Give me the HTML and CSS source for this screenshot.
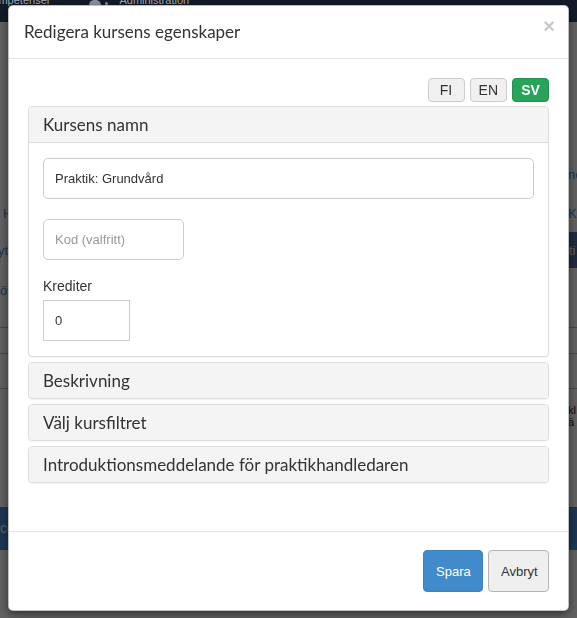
FILE: index.html
```html
<!DOCTYPE html>
<html lang="sv">
<head>
<meta charset="utf-8">
<title>Redigera kursens egenskaper</title>
<link rel="stylesheet" href="styles.css">
</head>
<body>
<div class="page">
  <nav class="topnav">
    <a class="nav-link nav-first">Kompetenser</a>
    <span class="nav-user">
      <svg width="14" height="14" viewBox="0 0 14 14"><circle cx="7" cy="4" r="3.4" fill="#8a929c"/><path d="M1 14 C1 9.5 3.5 8 7 8 C10.5 8 13 9.5 13 14 Z" fill="#8a929c"/></svg>
      <span class="nav-caret"></span>
    </span>
    <a class="nav-link">Administration</a>
  </nav>
  <main class="bg-content">
    <div class="bg-row r1"><span class="bg-left"></span><span class="bg-right bg-link">ne</span></div>
    <div class="bg-row r2"><span class="bg-left bg-link l-h">Hantera</span><span class="bg-right bg-link">Kä</span></div>
    <div class="bg-row r3"><span class="bg-left bg-link l-y">ytterligare</span><span class="bg-right bg-bar">ti</span></div>
    <div class="bg-row r4"><span class="bg-left bg-link">översikt</span></div>
    <div class="bg-table">
      <div class="bg-tr tr1"></div>
      <div class="bg-tr tr2"></div>
    </div>
    <div class="bg-row r5"><span class="bg-left"></span><span class="bg-right bg-small">kl<br>ä</span></div>
    <div class="bg-banner">certifikat</div>
  </main>
</div>

<div class="backdrop"></div>

<div class="modal">
  <div class="modal-dialog">
    <div class="modal-content">
      <div class="modal-header">
        <h4 class="modal-title">Redigera kursens egenskaper</h4>
        <button class="close" type="button">×</button>
      </div>
      <div class="modal-body">
        <div class="lang-switch">
          <button class="lang-btn" type="button">FI</button>
          <button class="lang-btn" type="button">EN</button>
          <button class="lang-btn active" type="button">SV</button>
        </div>
        <div class="panel-group">
          <section class="panel">
            <div class="panel-heading">Kursens namn</div>
            <div class="panel-body">
              <input class="form-control name-input" type="text" value="Praktik: Grundvård">
              <div class="code-group">
                <input class="form-control code-input" type="text" placeholder="Kod (valfritt)">
              </div>
              <label class="field-label">Krediter</label>
              <input class="form-control credit-input" type="text" value="0">
            </div>
          </section>
          <section class="panel">
            <div class="panel-heading">Beskrivning</div>
          </section>
          <section class="panel">
            <div class="panel-heading">Välj kursfiltret</div>
          </section>
          <section class="panel">
            <div class="panel-heading">Introduktionsmeddelande för praktikhandledaren</div>
          </section>
        </div>
      </div>
      <div class="modal-footer">
        <button class="btn btn-primary" type="button">Spara</button>
        <button class="btn btn-default" type="button">Avbryt</button>
      </div>
    </div>
  </div>
</div>
</body>
</html>
```

FILE: styles.css
```css
* { box-sizing: border-box; }

html, body {
  margin: 0;
  padding: 0;
  height: 618px;
  overflow: hidden;
}

body {
  font-family: "Liberation Sans", Arial, sans-serif;
  font-size: 14px;
  color: #333;
  background: #ffffff;
}

/* ---------- page behind the dialog ---------- */
.page {
  width: 100%;
}

.topnav {
  position: relative;
  z-index: 2;
  height: 22px;
  background: #131b28;
  display: flex;
  align-items: flex-start;
  overflow: hidden;
}

.nav-link {
  font-size: 11px;
  line-height: 11px;
  margin-top: -5px;
  color: #a3abb5;
  white-space: nowrap;
}

.nav-first {
  margin-left: -15px;
}

.nav-user {
  display: flex;
  align-items: flex-start;
  margin-left: 38px;
  margin-top: -8px;
}

.nav-caret {
  width: 3px;
  height: 3px;
  margin-left: 3px;
  margin-top: 10px;
  background: #8a929c;
  border-radius: 50%;
}

.nav-user + .nav-link {
  margin-left: 11px;
}

.bg-content {
  display: flex;
  flex-direction: column;
}

.bg-row {
  display: flex;
  align-items: center;
  font-size: 13px;
  white-space: nowrap;
}

.bg-left {
  flex: 1;
}

.bg-right {
  width: 9px;
  overflow: hidden;
}

.bg-link { color: #4a8fd4; }

.l-h { padding-left: 3px; }
.l-y { margin-left: -2px; }

.r1 { margin-top: 143px; height: 18px; }
.r2 { margin-top: 22px; height: 16px; }
.r3 { margin-top: 11px; height: 36px; }
.r4 { margin-top: 14px; height: 16px; }

.bg-bar {
  align-self: stretch;
  background: #546ea6;
  color: #ffffff;
  display: flex;
  align-items: center;
  padding-left: 1px;
}

.bg-table {
  margin-top: 29px;
  border-bottom: 1px solid #bbb;
}

.bg-tr {
  border-top: 1px solid #bbb;
}

.tr1 { height: 26px; }
.tr2 { height: 35px; }

.r5 {
  margin-top: 15px;
  height: 24px;
  align-items: flex-start;
}

.bg-small {
  font-size: 11px;
  line-height: 12px;
  color: #222;
}

.bg-banner {
  margin-top: 79px;
  height: 43px;
  background: #4a90d9;
  color: #ffffff;
  font-size: 14px;
  line-height: 43px;
  padding-left: 0;
}

.backdrop {
  position: fixed;
  inset: 0;
  z-index: 1;
  background: rgba(0, 0, 0, 0.62);
}

/* ---------- dialog ---------- */
.modal {
  position: fixed;
  inset: 0;
  z-index: 3;
}

.modal-dialog {
  margin: 5px 8px;
}

.modal-content {
  background: #ffffff;
  border: 1px solid rgba(0, 0, 0, 0.25);
  border-radius: 5px;
  box-shadow: 0 3px 9px rgba(0, 0, 0, 0.5);
}

.modal-header {
  display: flex;
  align-items: flex-start;
  justify-content: space-between;
  padding: 13px 15px 14px 15px;
  border-bottom: 1px solid #e5e5e5;
}

.modal-title {
  margin: 0;
  font-family: "Lato", "Open Sans", sans-serif;
  font-size: 17px;
  font-weight: 400;
  line-height: 25px;
  color: #333;
}

.close {
  margin-top: -3px;
  margin-right: -2px;
  padding: 0;
  border: 0;
  background: none;
  font-family: "Liberation Sans", Arial, sans-serif;
  font-size: 20px;
  font-weight: 700;
  line-height: 1;
  color: #c8c8c8;
  cursor: pointer;
}

.modal-body {
  padding: 19px 19px 19px 19px;
}

.lang-switch {
  display: flex;
  justify-content: flex-end;
  gap: 5px;
  margin-bottom: 4px;
}

.lang-btn {
  height: 24px;
  min-width: 37px;
  padding: 0 8px;
  border: 1px solid #cccccc;
  border-radius: 4px;
  background: #f0f0f0;
  color: #333;
  font-family: "Liberation Sans", Arial, sans-serif;
  font-size: 14px;
  line-height: 22px;
}

.lang-btn.active {
  background: #27a35a;
  border-color: #23914f;
  color: #ffffff;
  font-weight: 700;
}

.panel-group {
  padding-bottom: 24px;
}

.panel {
  border: 1px solid #dddddd;
  border-radius: 4px;
  margin-bottom: 5px;
  background: #ffffff;
  box-shadow: 0 1px 1px rgba(0, 0, 0, 0.05);
  overflow: hidden;
}

.panel-heading {
  height: 35px;
  padding: 0 14px;
  background: #f4f4f4;
  font-family: "Lato", "Open Sans", sans-serif;
  font-size: 17px;
  line-height: 35px;
  color: #333;
  white-space: nowrap;
}

.panel-heading:not(:last-child) {
  height: 36px;
  border-bottom: 1px solid #dddddd;
}

.panel-body {
  padding: 15px 14px;
}

.form-control {
  display: block;
  height: 41px;
  padding: 0 11px;
  border: 1px solid #cccccc;
  border-radius: 5px;
  background: #ffffff;
  font-family: "Liberation Sans", Arial, sans-serif;
  font-size: 13px;
  color: #333;
  outline: none;
}

.form-control::placeholder {
  color: #999999;
}

.name-input {
  width: 100%;
}

.code-group {
  margin-top: 20px;
  margin-bottom: 16px;
}

.code-input {
  width: 141px;
}

.field-label {
  display: block;
  font-size: 14px;
  line-height: 20px;
  margin-bottom: 4px;
  color: #333;
}

.credit-input {
  width: 87px;
  border-radius: 0;
}

.modal-footer {
  display: flex;
  justify-content: flex-end;
  gap: 5px;
  padding: 18px 19px 18px 19px;
  border-top: 1px solid #e5e5e5;
}

.btn {
  height: 42px;
  padding: 0 12px;
  border: 1px solid transparent;
  border-radius: 4px;
  font-family: "Liberation Sans", Arial, sans-serif;
  font-size: 13px;
  cursor: pointer;
}

.btn-primary {
  width: 60px;
  background: #428bca;
  border-color: #3a82c0;
  color: #ffffff;
}

.btn-default {
  width: 61px;
  background: #efefef;
  border-color: #b5b5b5;
  color: #333;
}
```
